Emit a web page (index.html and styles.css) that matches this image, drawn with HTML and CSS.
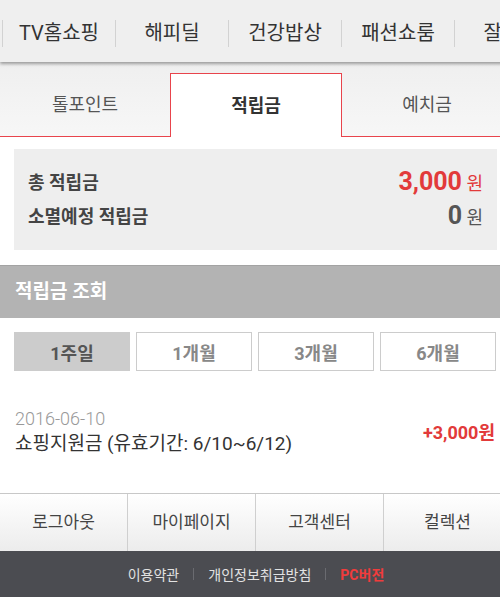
FILE: index.html
```html
<!DOCTYPE html>
<html lang="ko">
<head>
  <title>적립금</title>
  <meta charset="UTF-8">
  <meta name="viewport" content="width=device-width, initial-scale=1.0">
  <link rel="stylesheet" href="styles.css">
</head>
<body>
  <div class="page">
    <nav class="top-nav">
      <a class="nav-item">TV홈쇼핑</a>
      <a class="nav-item">해피딜</a>
      <a class="nav-item">건강밥상</a>
      <a class="nav-item">패션쇼룸</a>
      <a class="nav-item">잘산다</a>
    </nav>

    <div class="tab-strip">
      <a class="tab">톨포인트</a>
      <a class="tab active">적립금</a>
      <a class="tab">예치금</a>
    </div>

    <div class="summary-box">
      <div class="summary-row">
        <span class="summary-label">총 적립금</span>
        <span class="summary-value red"><b>3,000</b> 원</span>
      </div>
      <div class="summary-row">
        <span class="summary-label">소멸예정 적립금</span>
        <span class="summary-value"><b>0</b> 원</span>
      </div>
    </div>

    <h2 class="section-title">적립금 조회</h2>

    <div class="period-group">
      <button class="period-btn active">1주일</button>
      <button class="period-btn">1개월</button>
      <button class="period-btn">3개월</button>
      <button class="period-btn">6개월</button>
    </div>

    <ul class="history-list">
      <li class="history-item">
        <div class="history-info">
          <div class="history-date">2016-06-10</div>
          <div class="history-desc">쇼핑지원금 (유효기간: 6/10~6/12)</div>
        </div>
        <div class="history-amount">+3,000원</div>
      </li>
    </ul>

    <div class="footer-menu">
      <a class="footer-btn">로그아웃</a>
      <a class="footer-btn">마이페이지</a>
      <a class="footer-btn">고객센터</a>
      <a class="footer-btn">컬렉션</a>
    </div>

    <footer class="footer-links">
      <a class="footer-link">이용약관</a>
      <span class="footer-sep"></span>
      <a class="footer-link">개인정보취급방침</a>
      <span class="footer-sep"></span>
      <a class="footer-link pc">PC버전</a>
    </footer>
  </div>
</body>
</html>
```

FILE: styles.css
```css
:root {
  --red: #e23a3a;
  --tab-red: #e8444c;
  --text: #333333;
  --gray-text: #999999;
  --line: #cccccc;
}

* {
  margin: 0;
  padding: 0;
  box-sizing: border-box;
  font-family: Roboto, 'Noto Sans CJK KR', sans-serif;
}

html, body {
  overflow: hidden;
}

body {
  background: #ffffff;
  color: var(--text);
}

.page {
  width: 512px;
}

/* Top navigation */
.top-nav {
  display: flex;
  align-items: center;
  height: 62px;
  padding: 5px 0 0 2px;
  background: #efefef;
  box-shadow: 0 2px 3px rgba(0, 0, 0, 0.35);
  position: relative;
  z-index: 1;
  white-space: nowrap;
  overflow: hidden;
}

.nav-item {
  flex: 0 0 113px;
  height: 27px;
  line-height: 27px;
  border-left: 1px solid #d2d2d2;
  text-align: center;
  font-size: 20px;
  color: var(--text);
}

/* Tabs */
.tab-strip {
  display: grid;
  grid-template-columns: 170px 172px 170px;
  padding-top: 11px;
  background: linear-gradient(#efefef, #f7f7f7);
}

.tab {
  height: 64px;
  line-height: 63px;
  text-align: center;
  font-size: 18px;
  color: #555555;
  border-bottom: 1px solid var(--tab-red);
}

.tab.active {
  background: #ffffff;
  border: 1px solid var(--tab-red);
  border-bottom: none;
  color: var(--text);
  font-weight: 700;
}

/* Summary */
.summary-box {
  margin: 12px 15px 0 14px;
  padding: 15px 14px 18px;
  background: #eeeeee;
}

.summary-row {
  display: flex;
  justify-content: space-between;
  align-items: center;
  height: 34px;
}

.summary-label {
  font-size: 18px;
  font-weight: 700;
  color: #444444;
}

.summary-value {
  font-size: 18px;
  color: #555555;
}

.summary-value b {
  font-size: 25px;
  font-weight: 700;
}

.summary-value.red {
  color: var(--red);
}

/* Section title */
.section-title {
  margin-top: 15px;
  height: 53px;
  line-height: 52px;
  padding-left: 15px;
  background: #b3b3b3;
  border-top: 1px solid #a3a3a3;
  color: #ffffff;
  font-size: 19px;
  font-weight: 700;
}

/* Period buttons */
.period-group {
  display: grid;
  grid-template-columns: repeat(4, 116px);
  gap: 6px;
  padding: 14px 14px 0;
}

.period-btn {
  height: 39px;
  background: #ffffff;
  border: 1px solid var(--line);
  color: #888888;
  font-size: 18px;
  font-weight: 700;
}

.period-btn.active {
  background: #cccccc;
  color: #555555;
}

/* History */
.history-list {
  list-style: none;
  padding: 35px 17px 37px 15px;
}

.history-item {
  display: flex;
  justify-content: space-between;
  align-items: center;
}

.history-date {
  font-size: 18px;
  line-height: 25px;
  color: var(--gray-text);
  font-weight: 300;
}

.history-desc {
  font-size: 19px;
  line-height: 25px;
  color: var(--text);
}

.history-amount {
  font-size: 18px;
  font-weight: 700;
  color: var(--red);
}

/* Footer menu */
.footer-menu {
  display: grid;
  grid-template-columns: repeat(4, 128px);
  border-top: 1px solid #c8c8c8;
}

.footer-btn {
  height: 57px;
  line-height: 57px;
  text-align: center;
  font-size: 17px;
  color: #444444;
  background: linear-gradient(#ffffff, #ececec);
  border-right: 1px solid #cfcfcf;
}

/* Footer links */
.footer-links {
  display: flex;
  justify-content: center;
  align-items: center;
  gap: 14px;
  height: 46px;
  background: #4b4c51;
}

.footer-link {
  font-size: 14px;
  color: #e2e2e2;
}

.footer-link.pc {
  color: #f03c3c;
  font-weight: 700;
}

.footer-sep {
  width: 1px;
  height: 12px;
  background: #6a6b70;
}
```
